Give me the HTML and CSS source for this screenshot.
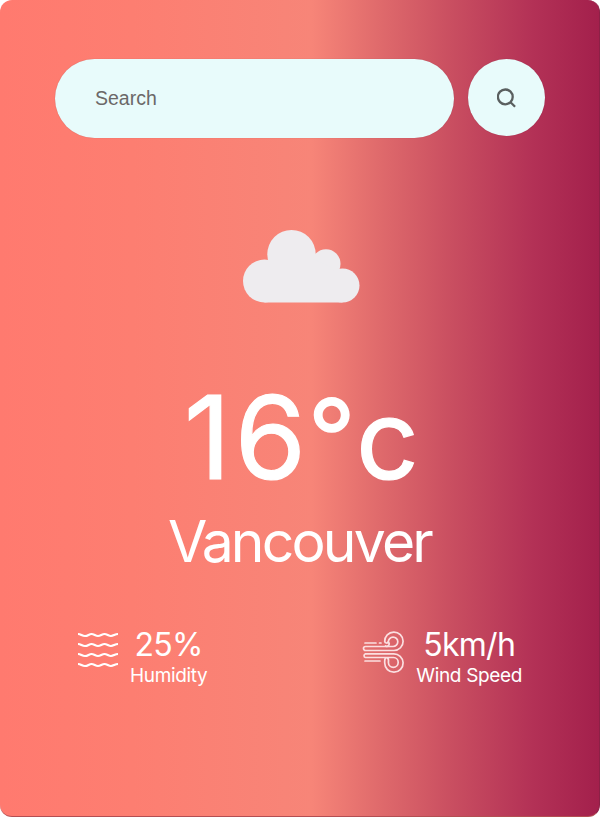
FILE: index.html
```html
<!DOCTYPE html>
<html lang="en">
<head>
<meta charset="utf-8">
<title>Weather</title>
<link rel="stylesheet" href="styles.css">
</head>
<body>
<main class="card">
  <form class="search">
    <input class="search-input" type="text" placeholder="Search" aria-label="Search">
    <button class="search-button" type="button" aria-label="Search">
      <svg width="20" height="20" viewBox="0 0 20 20" fill="none" stroke="#5a5f5f" stroke-width="2.3"><circle cx="8.300" cy="8.900" r="7.400"/><path d="M13.500 14.200l4.600 4.500"/></svg>
    </button>
  </form>
  <svg class="cloud" width="118" height="74" viewBox="0 0 118 74" fill="#eeecef">
    <circle cx="23.500" cy="52" r="21.500"/><circle cx="50.500" cy="25.200" r="24.200"/><circle cx="85" cy="34.800" r="14.500"/><circle cx="101.500" cy="56.500" r="17"/>
    <path d="M23.500 73.500V40L40 30H72L90 38L101.500 50V73.500Z"/>
  </svg>
  <h1 class="temp"><span class="one">1</span><span class="six">6</span><span class="degree">°</span><span class="unit">c</span></h1>
  <h2 class="city">Vancouver</h2>
  <section class="details">
    <div class="detail">
      <svg class="icon" width="40" height="40" viewBox="0 0 40 40" fill="none" stroke="#fff" stroke-width="2.2">
        <path d="M0 3C3 3 4 5 7 5S11 3 13.500 3S17.500 5 20 5S24 3 26.500 3S30.500 5 33 5S37 3 40 3"/>
        <path d="M0 13C3 13 4 15 7 15S11 13 13.500 13S17.500 15 20 15S24 13 26.500 13S30.500 15 33 15S37 13 40 13"/>
        <path d="M0 23C3 23 4 25 7 25S11 23 13.500 23S17.500 25 20 25S24 23 26.500 23S30.500 25 33 25S37 23 40 23"/>
        <path d="M0 33C3 33 4 35 7 35S11 33 13.500 33S17.500 35 20 35S24 33 26.500 33S30.500 35 33 35S37 33 40 33"/>
      </svg>
      <div class="reading"><p class="value">25%</p><p class="label">Humidity</p></div>
    </div>
    <div class="detail wind">
      <svg class="icon" width="41" height="41" viewBox="0 0 41 41" fill="none" stroke="#fbdfe1" stroke-width="1.700" stroke-linecap="round">
        <path d="M2 11H13M16.500 11H18M2 29H17"/>
        <path d="M2.500 14.500H30A4.700 4.700 0 1 0 25.400 10A2 2 0 0 1 21.700 9.500A9.200 9.200 0 1 1 31 18.500H2.500A2 2 0 0 1 2.500 14.500Z"/>
        <path d="M2.500 21.800H30.500A9.200 9.200 0 1 1 21.700 31V29Q21.700 25.500 24 25.500Q26 26.500 25.400 30.500A4.900 4.900 0 1 0 30.500 25.500H2.500A1.900 1.900 0 0 1 2.500 21.800Z"/>
        <path d="M22.500 14A2 2 0 0 0 25 10"/>
      </svg>
      <div class="reading"><p class="value">5km/h</p><p class="label">Wind Speed</p></div>
    </div>
  </section>
</main>
</body>
</html>
```
FILE: styles.css
```css
* { box-sizing: border-box; margin: 0; padding: 0; }
body { background: #fff; font-family: Inter, "Liberation Sans", sans-serif; }
.card {
  width: 600px;
  height: 817px;
  padding-top: 59px;
  border-radius: 12px;
  border-right: 1px solid #8b2146;
  border-bottom: 1px solid #b34e52;
  background: linear-gradient(90deg, #ff7a6f 0%, #fd7e71 22%, #f78578 52%, #e06b6c 63%, #c84d60 76%, #b33156 89%, #a3204c 100%);
  color: #fff;
  display: flex;
  flex-direction: column;
  align-items: center;
}
.search { width: 490px; display: flex; gap: 14px; align-self: flex-start; margin-left: 55px; }
.search-input {
  width: 399px;
  height: 79px;
  padding: 0 40px;
  border: 0;
  border-radius: 40px;
  background: #e8fbfb;
  box-shadow: 0 0 1px rgba(90, 30, 45, 0.3);
  font: 19.5px "Liberation Sans", sans-serif;
}
.search-input::placeholder { color: #6b6868; opacity: 1; }
.search-button {
  width: 77px;
  height: 77px;
  border: 0;
  border-radius: 50%;
  background: #e8fbfb;
  box-shadow: 0 0 1px rgba(90, 30, 45, 0.3);
  display: flex;
  align-items: center;
  justify-content: center;
}
.cloud { margin-top: 91px; margin-left: 1px; overflow: visible; }
.temp { margin-top: 77px; margin-left: 4px; font-size: 115px; font-weight: 400; line-height: 116px; white-space: nowrap; -webkit-text-stroke: 1.2px #fff; }
.one { letter-spacing: 4px; }
.six { letter-spacing: 1px; }
.degree { display: inline-block; font-size: 107px; font-weight: 500; line-height: 1; -webkit-text-stroke: 0; transform: translateY(-4px); }
.unit { font-size: 110px; line-height: 1; }
.city { margin-top: 11px; font-size: 57px; font-weight: 400; line-height: 70px; letter-spacing: -2.8px; }
.details { width: 100%; margin-top: 48px; padding: 0 77px 0 78px; display: flex; justify-content: space-between; }
.detail { display: flex; gap: 12px; }
.icon { margin-top: 6px; flex: none; }
.wind .icon { margin-top: 7px; overflow: visible; }
.reading { text-align: center; white-space: nowrap; }
.value { font-size: 32px; line-height: 40px; letter-spacing: -0.7px; }
.label { font-size: 19px; line-height: 22px; letter-spacing: -0.35px; }
```
